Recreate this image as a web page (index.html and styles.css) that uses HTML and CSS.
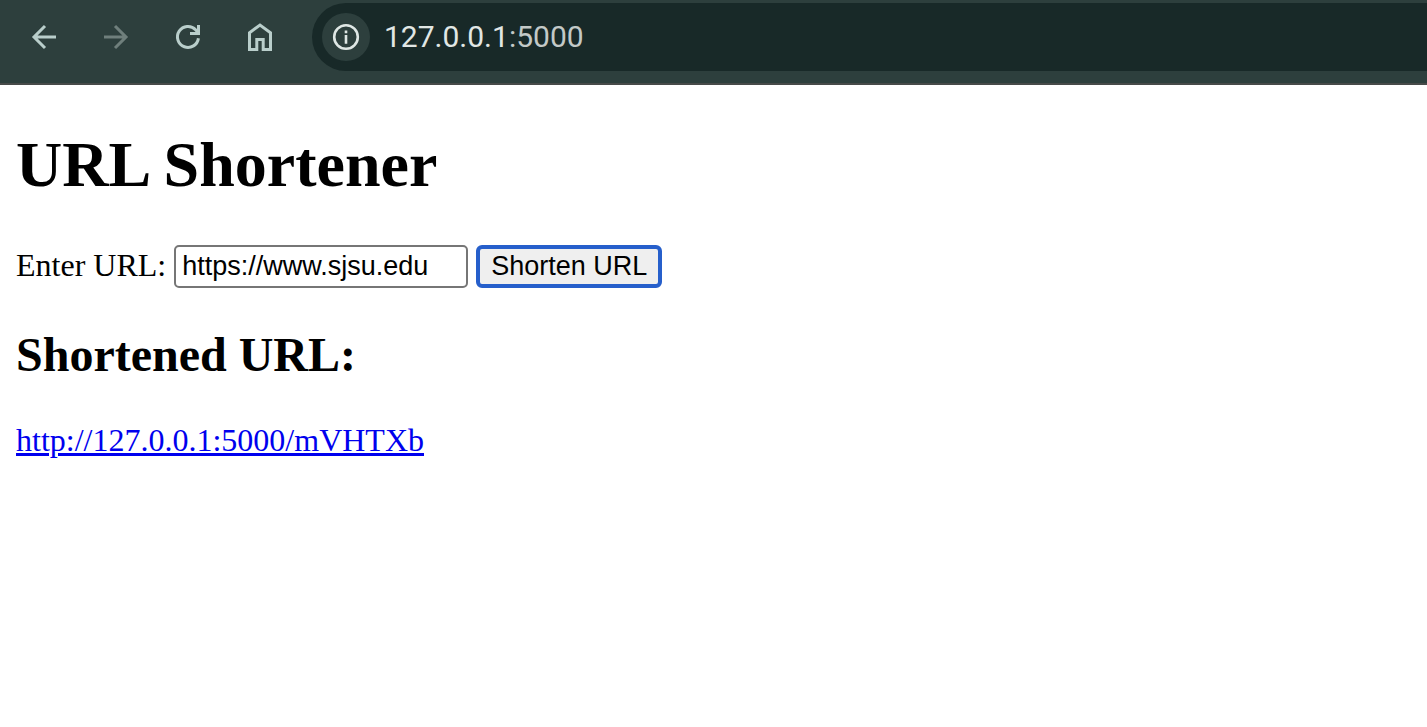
FILE: index.html
```html
<!DOCTYPE html>
<html lang="en">
<head>
<meta charset="utf-8">
<title>URL Shortener</title>
<link rel="stylesheet" href="styles.css">
</head>
<body>
<header class="toolbar">
  <nav class="nav" aria-label="Browser">
    <button class="nav-button" type="button" aria-label="Back">
      <svg class="icon" viewBox="0 0 36 36"><path d="M30 18H8M19 7L8 18l11 11"/></svg>
    </button>
    <button class="nav-button nav-button-off" type="button" aria-label="Forward" disabled>
      <svg class="icon" viewBox="0 0 36 36"><path d="M6 18h22M17 7l11 11-11 11"/></svg>
    </button>
    <button class="nav-button" type="button" aria-label="Reload">
      <svg class="icon" viewBox="0 0 36 36"><path d="M28.4 19.2A10.5 10.5 0 1 1 25.6 10.7L28 13.5M28.5 6V14.5H20"/></svg>
    </button>
    <button class="nav-button" type="button" aria-label="Home">
      <svg class="icon" viewBox="0 0 36 36"><path d="M7.5 30.5V13.8L18 6l10.5 7.8V30.5H21.2V20.5H14.8V30.5Z"/></svg>
    </button>
  </nav>
  <div class="address">
    <button class="info" type="button" aria-label="View site information">
      <svg class="icon icon-info" viewBox="0 0 36 36"><circle cx="18" cy="18" r="11.8"/><path d="M18 16v8.7M18 11.6v2.6"/></svg>
    </button>
    <span class="location">127.0.0.1<span class="port">:5000</span></span>
  </div>
</header>
<main class="page">
  <h1 class="title">URL Shortener</h1>
  <form class="form">
    <label class="label" for="url">Enter URL:</label>
    <input class="url" id="url" type="text" value="https://www.sjsu.edu">
    <button class="submit" type="button">Shorten URL</button>
  </form>
  <h2 class="subtitle">Shortened URL:</h2>
  <a class="link" href="http://127.0.0.1:5000/mVHTXb">http://127.0.0.1:5000/mVHTXb</a>
</main>
</body>
</html>
```
FILE: styles.css
```css
* {
  box-sizing: border-box;
}

body {
  margin: 0;
  background: #fff;
  color: #000;
  font-family: "Liberation Serif", "Times New Roman", serif;
  font-size: 32px;
  line-height: 36px;
}

.toolbar {
  display: flex;
  gap: 16px;
  padding: 3px 0 12px 8px;
  background: #2d3f3d;
  border-bottom: 2px solid #474a49;
}

.nav {
  display: flex;
}

.nav-button {
  display: flex;
  align-items: center;
  justify-content: center;
  width: 72px;
  padding: 0;
  border: 0;
  background: none;
  color: #b9cecb;
}

.nav-button-off {
  color: #6f7f7c;
}

.icon {
  width: 36px;
  height: 36px;
  fill: none;
  stroke: currentColor;
  stroke-width: 3;
}

.icon-info {
  stroke-width: 2.6;
}

.address {
  display: flex;
  flex: 1;
  align-items: center;
  gap: 14px;
  height: 68px;
  padding-left: 10px;
  border-radius: 34px 0 0 34px;
  background: #182928;
}

.info {
  display: flex;
  align-items: center;
  justify-content: center;
  width: 48px;
  height: 48px;
  padding: 0;
  border: 0;
  border-radius: 50%;
  background: #2d3f3d;
  color: #dfe7e5;
}

.location {
  color: #e1e7e5;
  font-family: Roboto, sans-serif;
  font-size: 30px;
}

.port {
  color: #c3c9c7;
}

.page {
  padding: 43px 16px;
}

.title {
  margin: 0 0 43px;
  font-size: 64px;
  line-height: 74px;
}

.form {
  display: flex;
  align-items: center;
  gap: 8px;
}

.label {
  padding-bottom: 4px;
}

.url,
.submit {
  height: 43px;
  font-family: "Liberation Sans", Arial, sans-serif;
  font-size: 27px;
  line-height: 32px;
  color: #000;
}

.url {
  width: 294px;
  padding: 2px 6px;
  border: 2px solid #767676;
  border-radius: 5px;
  background: #fff;
}

.submit {
  padding: 0 11px 1px;
  border: 4px solid #265fcb;
  border-radius: 6px;
  background: #efefef;
}

.subtitle {
  margin: 40px 0;
  font-size: 48px;
  line-height: 54px;
}

.link {
  color: #00e;
  text-decoration-thickness: 3px;
}
```
